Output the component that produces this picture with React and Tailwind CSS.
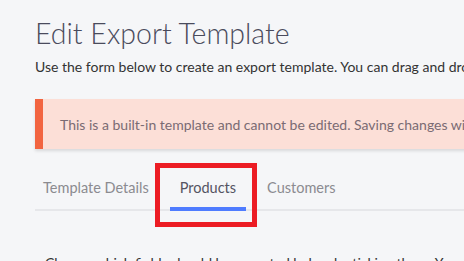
export default function App() {
  return (
    <div className="relative h-[261px] w-[464px] overflow-hidden bg-[#f5f6f8] font-['Lato',sans-serif]">
      <div className="pl-[35px] pt-[14px] w-[700px]">
        <h1 className="text-[28.5px] leading-[38px] font-light text-[#4a4b5c]">Edit Export Template</h1>
        <p className="mt-[5px] text-[14px] leading-[20px] text-[#333] whitespace-nowrap">
          Use the form below to create an export template. You can drag and drop fields to reorder them.
        </p>

        <div className="mt-[22px] flex h-[50px] items-center border-l-[8px] border-[#f26440] bg-[#fcdfd7] pl-[17px] shadow-[0_2px_3px_rgba(0,0,0,0.12)]">
          <span className="text-[14px] text-[#7a6b73] whitespace-nowrap">
            This is a built-in template and cannot be edited. Saving changes will create a new template.
          </span>
        </div>

        <div className="mt-[28px] flex gap-[11px] border-b-2 border-[#e6e7ea] text-[14.5px]">
          <div className="pl-[8px] pr-[10px] pb-[10px] text-[#8b8b90]">Template Details</div>
          <div className="border-b-4 border-[#4f7cff] px-[10px] pb-[8px] -mb-[2px] text-[#545462]">Products</div>
          <div className="px-[10px] pb-[10px] text-[#8b8b90]">Customers</div>
        </div>

        <p className="mt-[42px] pl-[10px] text-[14px] leading-[20px] text-[#333] whitespace-nowrap">
          Choose which fields should be exported below by ticking them. You can drag and drop them.
        </p>
      </div>

      <div className="absolute left-[155px] top-[163px] h-[64px] w-[102px] border-[5px] border-[#ec1c24]" />
    </div>
  );
}
